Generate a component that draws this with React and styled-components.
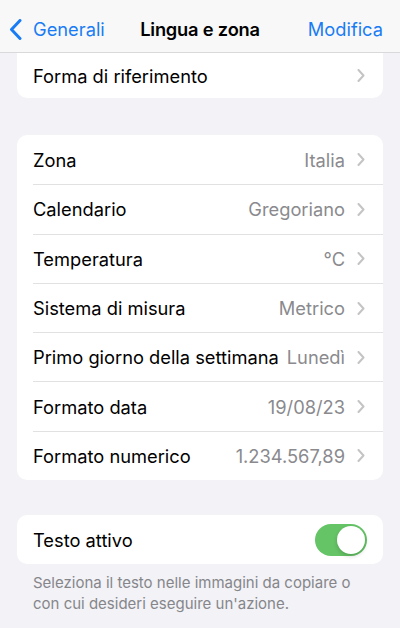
import React, { useState } from 'react';
import styled, { createGlobalStyle } from 'styled-components';

const GlobalStyle = createGlobalStyle`
  body {
    margin: 0;
    background: #f2f2f7;
    font-family: Inter, "Liberation Sans", sans-serif;
    -webkit-font-smoothing: antialiased;
  }
`;

const Page = styled.div`
  width: 400px;
  height: 628px;
  overflow: hidden;
  background: #f2f2f7;
`;

const NavBar = styled.div`
  height: 53px;
  display: grid;
  grid-template-columns: 1fr auto 1fr;
  align-items: center;
  padding: 6px 17px 0;
  background: #f8f8f8;
  border-bottom: 1px solid #d9d9dc;
  box-sizing: border-box;
`;

const BackButton = styled.div`
  display: flex;
  align-items: center;
  gap: 11px;
  margin-left: -8px;
  color: #1a7cf5;
  font-size: 18.3px;
`;

const Title = styled.div`
  font-size: 18.3px;
  font-weight: 600;
  letter-spacing: -0.2px;
  color: #000;
`;

const EditButton = styled.div`
  justify-self: end;
  color: #1a7cf5;
  font-size: 18.3px;
`;

const Content = styled.div`
  padding: 0 17px;
`;

const Card = styled.div`
  background: #fff;
  border-radius: ${(p) => (p.$flatTop ? '0 0 10px 10px' : '10px')};
  overflow: hidden;
  margin-top: ${(p) => p.$gap || 0}px;
`;

const Row = styled.div`
  height: ${(p) => p.$h || 49}px;
  display: flex;
  align-items: center;
  margin-left: 16px;
  padding-right: ${(p) => p.$pr || 18}px;
  box-sizing: border-box;
  & + & {
    border-top: 1px solid #e1e1e4;
  }
`;

const Label = styled.div`
  flex: 1;
  font-size: 18.3px;
  color: #000;
  white-space: nowrap;
`;

const Value = styled.div`
  font-size: 18.3px;
  color: #8a8a8e;
  margin-right: 12px;
  white-space: nowrap;
`;

const Footer = styled.div`
  padding: 8px 16px 0;
  font-size: 15px;
  line-height: 21px;
  color: #86868a;
`;

const Track = styled.div`
  width: 52px;
  height: 32px;
  border-radius: 16px;
  background: ${(p) => (p.$on ? '#65c466' : '#e9e9eb')};
  display: flex;
  align-items: center;
  justify-content: ${(p) => (p.$on ? 'flex-end' : 'flex-start')};
  padding: 2px;
  box-sizing: border-box;
  cursor: pointer;
`;

const Knob = styled.div`
  width: 28px;
  height: 28px;
  border-radius: 50%;
  background: #fff;
  box-shadow: 0 2px 4px rgba(0, 0, 0, 0.18);
`;

const BackChevron = () => (
  <svg width="13" height="21" viewBox="0 0 13 21">
    <path d="M11 1.5 L2.5 10.5 L11 19.5" fill="none" stroke="#1a7cf5" strokeWidth="3" strokeLinecap="round" strokeLinejoin="round" />
  </svg>
);

const Chevron = () => (
  <svg width="8" height="13" viewBox="0 0 8 13">
    <path d="M1.5 1 L6.5 6.5 L1.5 12" fill="none" stroke="#c4c4c7" strokeWidth="2" strokeLinecap="round" strokeLinejoin="round" />
  </svg>
);

const regionRows = [
  ['Zona', 'Italia'],
  ['Calendario', 'Gregoriano'],
  ['Temperatura', '°C'],
  ['Sistema di misura', 'Metrico'],
  ['Primo giorno della settimana', 'Lunedì'],
  ['Formato data', '19/08/23'],
  ['Formato numerico', '1.234.567,89'],
];

const App = () => {
  const [liveText, setLiveText] = useState(true);

  return (
    <Page>
      <GlobalStyle />
      <NavBar>
        <BackButton>
          <BackChevron />
          Generali
        </BackButton>
        <Title>Lingua e zona</Title>
        <EditButton>Modifica</EditButton>
      </NavBar>
      <Content>
        <Card $flatTop>
          <Row $h={45}>
            <Label>Forma di riferimento</Label>
            <Chevron />
          </Row>
        </Card>
        <Card $gap={37}>
          {regionRows.map(([label, value]) => (
            <Row key={label} $h={49.3}>
              <Label>{label}</Label>
              <Value>{value}</Value>
              <Chevron />
            </Row>
          ))}
        </Card>
        <Card $gap={35}>
          <Row $pr={16}>
            <Label>Testo attivo</Label>
            <Track $on={liveText} onClick={() => setLiveText(!liveText)}>
              <Knob />
            </Track>
          </Row>
        </Card>
        <Footer>
          Seleziona il testo nelle immagini da copiare o con cui desideri eseguire un'azione.
        </Footer>
      </Content>
    </Page>
  );
};

export default App;
